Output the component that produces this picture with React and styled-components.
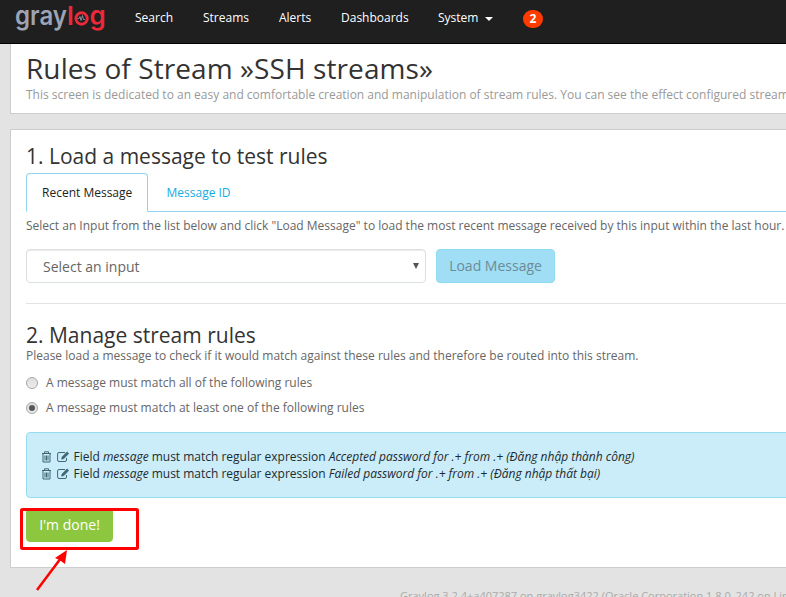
import React from 'react';
import styled, { createGlobalStyle, css } from 'styled-components';

const Global = createGlobalStyle`
  * { box-sizing: border-box; }
  html, body { margin: 0; background: #e3e3e3; overflow: hidden; }
  body { font: 12px/17px "Open Sans", "Noto Sans", sans-serif; color: #666; }
  h1, h2, p { margin: 0; white-space: nowrap; }
`;

const Page = styled.div`
  width: 100%;
  height: 597px;
  overflow: hidden;
  position: relative;
`;

const Navbar = styled.nav`
  display: flex;
  height: 44px;
  padding-left: 15px;
  background: #1f1f1f;
  border-bottom: 1px solid #000;
`;

const Logo = styled.svg`
  width: 92px;
  height: 36px;
  margin-right: 28px;
  flex: none;
  overflow: visible;
`;

const NavLinks = styled.div`
  display: flex;
  gap: 30px;
  height: 35px;
  align-items: center;
`;

const NavLink = styled.a`
  color: #fff;
  white-space: nowrap;
  display: flex;
  align-items: center;
  width: ${(p) => p.$width}px;
`;

const Caret = styled.span`
  margin: 2px 0 0 7px;
  border: 4px solid transparent;
  border-top-color: #fff;
  border-bottom: 0;
`;

const Badge = styled.span`
  width: 20px;
  height: 18px;
  border-radius: 9px;
  margin-top: 3px;
  background: #ff3b00;
  color: #fff;
  font-weight: 700;
  line-height: 17px;
  text-align: center;
`;

const Card = styled.section`
  margin-left: 10px;
  padding-left: 15px;
  width: 900px;
  background: #fff;
  border: 1px solid #cdcdcd;
`;

const HeaderCard = styled(Card)`
  height: 70px;
  border-top: 0;
  padding-top: 4px;
`;

const MainCard = styled(Card)`
  height: 439px;
  margin-top: 15px;
  padding-top: 9px;
`;

const PageTitle = styled.h1`
  font-size: 28px;
  line-height: 40px;
  height: 38px;
  font-weight: 400;
  letter-spacing: 0.09px;
  color: #333;
`;

const SectionTitle = styled.h2`
  font-size: 21px;
  line-height: 34px;
  font-weight: 400;
  color: #333;
`;

const Text = styled.p`
  line-height: 17px;
  color: ${(p) => (p.$muted ? '#999' : '#666')};
`;

const Tabs = styled.div`
  display: flex;
  height: 39px;
  border-bottom: 1px solid #8dd6ed;
  margin-bottom: 5px;
`;

const Tab = styled.a`
  height: 39px;
  padding: 0 15px;
  line-height: 37px;
  white-space: nowrap;
  color: #16ace3;
  border: 1px solid transparent;
  ${(p) => p.$active && css`
    width: 122px;
    margin-right: 2.5px;
    color: #222;
    background: #fff;
    border-color: #8dd6ed;
    border-bottom-color: #fff;
    border-radius: 4px 4px 0 0;
  `}
`;

const InputRow = styled.div`
  display: flex;
  gap: 10px;
  margin-top: 15px;
  padding-bottom: 20px;
  border-bottom: 1px solid #e3e3e3;
`;

const Select = styled.div`
  display: flex;
  justify-content: space-between;
  width: 400px;
  height: 34px;
  padding: 0 6px 0 16px;
  font-size: 14px;
  line-height: 33px;
  border: 1px solid #dcdfe1;
  border-radius: 4px;
  box-shadow: inset 0 1px 1px rgba(0, 0, 0, 0.075);
`;

const SelectArrow = styled.svg`
  width: 6px;
  height: 6px;
  margin-top: 13px;
`;

const Button = styled.button`
  width: ${(p) => p.$width}px;
  height: 34px;
  padding: 0;
  font: 14px/32px "Open Sans", sans-serif;
  color: ${(p) => (p.$primary ? '#fff' : '#6e8b96')};
  background: ${(p) => (p.$primary ? '#8dc63f' : '#9fdef5')};
  border: 1px solid ${(p) => (p.$primary ? '#8dc63f' : '#8edbf2')};
  border-radius: 4px;
  white-space: nowrap;
`;

const RulesHeading = styled.div`
  padding-top: 14px;
  ${SectionTitle} { height: 29px; }
`;

const RadioLine = styled.label`
  display: flex;
  align-items: center;
  height: 25px;
  gap: 8px;
`;

const RadioGroup = styled.div`
  padding-top: 6px;
`;

const Radio = styled.span`
  display: grid;
  place-items: center;
  width: 12px;
  height: 12px;
  border: 1px solid #a6a6a6;
  border-radius: 50%;
  background: linear-gradient(#dedede, #ececec);
  &::after {
    content: '';
    width: 6px;
    height: 6px;
    border-radius: 50%;
    background: ${(p) => (p.$checked ? '#575757' : 'transparent')};
  }
`;

const RuleList = styled.div`
  width: 900px;
  height: 66px;
  margin-top: 12px;
  padding: 15px 14px;
  background: #caedf9;
  border: 1px solid #97dcee;
  border-radius: 4px;
`;

const Rule = styled.div`
  display: flex;
  align-items: center;
  height: 17px;
  color: #1f2a2e;
  white-space: nowrap;
  letter-spacing: -0.01px;
`;

const RuleIcon = styled.svg`
  width: 12px;
  height: 12px;
  flex: none;
  margin-right: ${(p) => p.$gap}px;
  fill: none;
  stroke: #3f6775;
`;

const Actions = styled.div`
  padding-top: 10px;
`;

const Footer = styled.footer`
  padding: 19px 0 0 400px;
  color: #aaa;
  font-size: 11px;
  white-space: nowrap;
`;

const Annotation = styled.svg`
  position: absolute;
  left: 16px;
  top: 504px;
  width: 128px;
  height: 92px;
  pointer-events: none;
`;

const links = [['Search', 38], ['Streams', 46], ['Alerts', 32], ['Dashboards', 67]];
const rules = [
  'Accepted password for .+ from .+ (Đăng nhập thành công)',
  'Failed password for .+ from .+ (Đăng nhập thất bại)',
];

const Trash = () => (
  <RuleIcon viewBox="0 0 12 12" $gap={3.5}>
    <path d="M1 2.5h9M3.5 2V.8h4V2M2 3v8h7V3M4 4.5v5M5.5 4.5v5M7 4.5v5" />
  </RuleIcon>
);

const Edit = () => (
  <RuleIcon viewBox="0 0 12 12" $gap={5}>
    <path d="M8 1.5H2Q.6 1.5.6 3v6Q.6 10.5 2 10.5h6Q9.5 10.5 9.5 9V7" />
    <path d="M4.5 8.2 5 6 10 .8 11.8 2.5 6.8 7.7Z" fill="#3f6775" strokeWidth=".5" />
  </RuleIcon>
);

export default function App() {
  return (
    <Page>
      <Global />
      <Navbar>
        <Logo viewBox="0 0 92 36" fontFamily="Inter" fontWeight="600" fontSize="26">
          <text x="0" y="25" fill="#9ca4b5" textLength="52" lengthAdjust="spacingAndGlyphs">gray</text>
          <text x="52" y="25" fill="#ed2939">l</text>
          <circle cx="66.6" cy="18.5" r="5.7" fill="none" stroke="#ed2939" strokeWidth="2.9" />
          <text x="74.5" y="25" fill="#ed2939">g</text>
          <path d="M62.5 18.5h1.5l1-2 1 4 1.5-5 1 4h1.5" fill="none" stroke="#9ca4b5" strokeWidth=".8" />
        </Logo>
        <NavLinks>
          {links.map(([name, width]) => <NavLink key={name} $width={width}>{name}</NavLink>)}
          <NavLink $width={55}>System<Caret /></NavLink>
          <Badge>2</Badge>
        </NavLinks>
      </Navbar>
      <HeaderCard>
        <PageTitle>Rules of Stream »SSH streams»</PageTitle>
        <Text $muted>This screen is dedicated to an easy and comfortable creation and manipulation of stream rules. You can see the effect configured stream rules</Text>
      </HeaderCard>
      <MainCard>
        <SectionTitle>1. Load a message to test rules</SectionTitle>
        <Tabs>
          <Tab $active>Recent Message</Tab>
          <Tab>Message ID</Tab>
        </Tabs>
        <Text>Select an Input from the list below and click "Load Message" to load the most recent message received by this input within the last hour.</Text>
        <InputRow>
          <Select>
            Select an input
            <SelectArrow viewBox="0 0 6 6"><path d="M0 0h6L3 6z" fill="#555" /></SelectArrow>
          </Select>
          <Button $width={119}>Load Message</Button>
        </InputRow>
        <RulesHeading>
          <SectionTitle>2. Manage stream rules</SectionTitle>
          <Text>Please load a message to check if it would match against these rules and therefore be routed into this stream.</Text>
        </RulesHeading>
        <RadioGroup>
          <RadioLine><Radio />A message must match all of the following rules</RadioLine>
          <RadioLine><Radio $checked />A message must match at least one of the following rules</RadioLine>
        </RadioGroup>
        <RuleList>
          {rules.map((rule) => (
            <Rule key={rule}>
              <Trash />
              <Edit />
              <span>Field <em>message</em> must match regular expression <em>{rule}</em></span>
            </Rule>
          ))}
        </RuleList>
        <Actions>
          <Button $primary $width={87}>I'm done!</Button>
        </Actions>
      </MainCard>
      <Footer>Graylog 3.2.4+a407287 on graylog3422 (Oracle Corporation 1.8.0_242 on Linux</Footer>
      <Annotation viewBox="0 0 128 92">
        <rect x="5.5" y="5.5" width="116" height="39" rx="1" fill="none" stroke="#f00" strokeWidth="3" />
        <path d="M21 86 45 54" stroke="#f00" strokeWidth="2.5" />
        <path d="M51 46 39 54 43.5 56 49 60Z" fill="#f00" />
      </Annotation>
    </Page>
  );
}
